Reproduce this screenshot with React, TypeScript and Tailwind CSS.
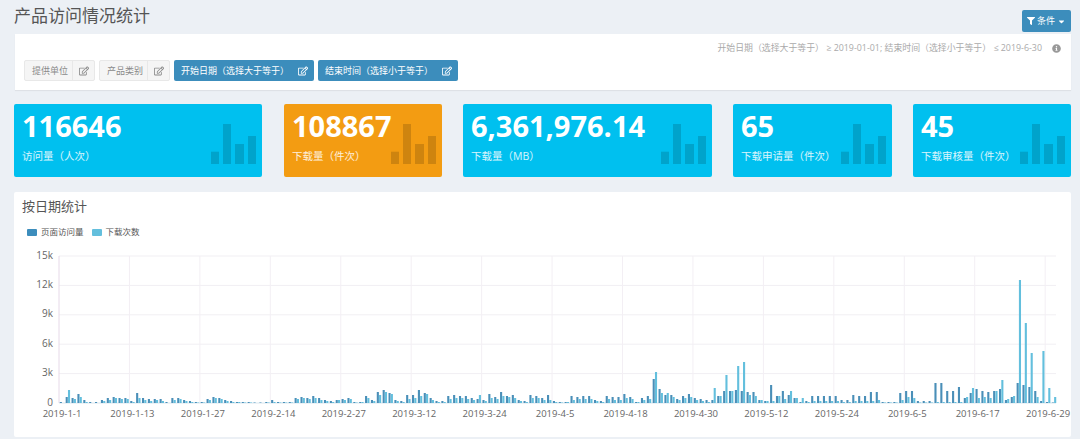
import { FaCaretDown, FaFilter, FaInfoCircle, FaRegEdit } from "react-icons/fa";

const dark = [
  1, 6, 5, 9, 3, 1, 1, 3, 5, 6, 5, 5,
  2, 10, 5, 4, 4, 4, 1, 5, 5, 3, 2, 1,
  1, 4, 6, 5, 3, 2, 1, 1, 1, 0.5, 0.5, 1,
  3, 1, 1, 1, 5, 6, 5, 7, 5, 3, 2, 3,
  4, 5, 1, 1, 7, 3, 11, 13, 10, 3, 2, 8,
  8, 13, 10, 5, 2, 2, 7, 8, 7, 7, 5, 4,
  3, 9, 6, 11, 7, 8, 3, 2, 8, 7, 5, 8,
  2, 1, 1, 7, 6, 7, 7, 3, 2, 7, 6, 6,
  9, 6, 1, 5, 7, 24, 14, 8, 8, 4, 7, 9,
  5, 4, 3, 3, 7, 12, 12, 13, 12, 11, 11, 3,
  2, 18, 7, 12, 8, 5, 1, 2, 7, 7, 7, 7,
  7, 3, 3, 8, 7, 7, 11, 11, 1, 1, 1, 10,
  12, 12, 2, 2, 2, 20, 20, 12, 12, 16, 5, 10,
  14, 12, 11, 12, 14, 3, 6, 20, 18, 16, 12, 2,
  1, 0.5,
];

const light = [
  0, 13, 4, 6, 1, 0, 0, 2, 3, 5, 4, 4,
  1, 5, 3, 2, 3, 2, 0, 3, 4, 2, 1, 0.5,
  0.5, 3, 5, 4, 2, 1, 1, 0.5, 0.5, 0, 0, 0.5,
  1, 0.5, 0.5, 0.5, 4, 5, 4, 5, 3, 2, 1, 3,
  3, 4, 0.5, 1, 5, 2, 8, 11, 9, 2, 1, 4,
  5, 7, 9, 3, 1, 1, 4, 5, 5, 4, 3, 8,
  2, 5, 4, 7, 6, 5, 2, 1, 5, 5, 3, 3,
  1, 0.5, 1, 3, 4, 4, 4, 2, 1, 4, 3, 3,
  5, 4, 1, 3, 4, 31, 10, 10, 6, 3, 5, 6,
  3, 2, 1, 15, 7, 28, 12, 37, 41, 8, 7, 3,
  2, 2, 7, 4, 12, 5, 5, 1, 2, 2, 2, 2,
  2, 1, 1, 2, 2, 2, 2, 3, 0.5, 0.5, 0.5, 3,
  6, 5, 0.5, 0.5, 0.5, 1, 1, 1, 1, 1, 6, 15,
  5, 6, 5, 12, 23, 4, 7, 123, 80, 50, 6, 52,
  15, 6,
];

const xLabels = [
  "2019-1-1", "2019-1-13", "2019-1-27", "2019-2-14", "2019-2-27",
  "2019-3-12", "2019-3-24", "2019-4-5", "2019-4-18", "2019-4-30",
  "2019-5-12", "2019-5-24", "2019-6-5", "2019-6-17", "2019-6-29",
];

const yLabels = ["0", "3k", "6k", "9k", "12k", "15k"];

const cards = [
  { value: "116646", label: "访问量（人次）", width: "w-[248px] mr-px", bg: "bg-[#00c0ef]" },
  { value: "108867", label: "下载量（件次）", width: "w-[158px]", bg: "bg-[#f39c12]" },
  { value: "6,361,976.14", label: "下载量（MB）", width: "w-[249px]", bg: "bg-[#00c0ef]" },
  { value: "65", label: "下载申请量（件次）", width: "w-[159px]", bg: "bg-[#00c0ef]" },
  { value: "45", label: "下载审核量（件次）", width: "w-[158px]", bg: "bg-[#00c0ef]" },
];

function StatsIcon() {
  return (
    <svg className="absolute right-[6px] bottom-[13px]" width="45" height="40" viewBox="0 0 45 40" fill="currentColor">
      <rect x="0" y="27.7" width="8" height="12.3" />
      <rect x="12" y="0" width="8" height="40" />
      <rect x="24" y="20" width="9" height="20" />
      <rect x="37" y="12" width="8" height="28" />
    </svg>
  );
}

function DateChart() {
  const base = 403;
  const band = 5.87;
  return (
    <svg className="block mt-[5px]" width="1057" height="194" viewBox="14 243 1057 194">
      {yLabels.map((label, i) => {
        const y = base - i * 29.4;
        return (
          <g key={label}>
            {i > 0 && <line x1="59" x2="1056" y1={y} y2={y} stroke="#f1eff3" />}
            <text x="53" y={y + 2.5} textAnchor="end" fontSize="10" fill="#666">{label}</text>
          </g>
        );
      })}
      {xLabels.map((label, i) => {
        const x = 59 + i * 70.44;
        return (
          <g key={label}>
            <line x1={x} x2={x} y1="256" y2={base} stroke={i === 0 ? "#e6d9e8" : "#f3eff4"} />
            <text x={x + 3} y="416.5" textAnchor="middle" fontSize="9.5" fill="#666">{label}</text>
          </g>
        );
      })}
      <line x1="59" x2="1056" y1={base} y2={base} stroke="#d9e6ee" />
      {dark.map((h, i) => {
        const center = 62 + i * band;
        return (
          <g key={i}>
            <rect x={center - 2.2} y={base - h} width="2.1" height={h} fill="#4a8fb8" />
            <rect x={center + 0.1} y={base - light[i]} width="2.1" height={light[i]} fill="#63bfdd" />
          </g>
        );
      })}
    </svg>
  );
}

function GrayFilter({ label }: { label: string }) {
  return (
    <div className="flex h-[21px] w-[71px] items-center rounded-[2px] border border-[#e8e8e8] bg-[#f5f5f5] text-[#8a8a8a]">
      <span className="flex-1 pl-[7px] text-[9px]">{label}</span>
      <span className="flex h-full w-[22px] items-center justify-center border-l border-[#e8e8e8]">
        <FaRegEdit className="text-[10px]" />
      </span>
    </div>
  );
}

function BlueFilter({ label }: { label: string }) {
  return (
    <div className="flex h-[21px] w-[140px] items-center justify-between rounded-[2px] bg-[#3c8dbc] pl-[7px] pr-[6px] text-white">
      <span className="text-[9px]">{label}</span>
      <FaRegEdit className="text-[10px]" />
    </div>
  );
}

export default function App() {
  return (
    <div className="h-[439px] w-[1080px] overflow-hidden bg-[#ecf0f5] pl-[14px] pr-[9px] font-['Open_Sans','Noto_Sans_CJK_SC',sans-serif]">
      {/* Header */}
      <div className="flex h-[34px] items-start justify-between">
        <h1 className="mt-[4px] text-[17px] leading-6 font-normal text-[#555]">产品访问情况统计</h1>
        <button className="mt-[10px] flex h-[22px] w-[49px] items-center justify-center gap-[2px] rounded-[2px] bg-[#3c8dbc] text-[9px] text-white">
          <FaFilter className="text-[8px]" />
          条件
          <FaCaretDown className="text-[9px]" />
        </button>
      </div>

      {/* Filters */}
      <div className="ml-px h-[56px] bg-white px-[9px] shadow-[0_1px_1px_rgba(0,0,0,0.06)]">
        <div className="flex h-[26px] items-center justify-end gap-[10px] pr-[1px] pt-[2px] text-[8.9px] text-[#aaa]">
          <span>开始日期（选择大于等于） ≥ 2019-01-01; 结束时间（选择小于等于） ≤ 2019-6-30</span>
          <FaInfoCircle className="text-[9px] text-[#999]" />
        </div>
        <div className="flex gap-[4px]">
          <GrayFilter label="提供单位" />
          <GrayFilter label="产品类别" />
          <BlueFilter label="开始日期（选择大于等于）" />
          <BlueFilter label="结束时间（选择小于等于）" />
        </div>
      </div>

      {/* Stat cards */}
      <div className="mt-[14px] flex h-[73px] gap-[21px]">
        {cards.map((card) => (
          <div key={card.value} className={`relative rounded-[2px] px-[8px] pt-[2px] text-white ${card.width} ${card.bg}`}>
            <div className="text-[29px] leading-[40px] font-bold whitespace-nowrap">{card.value}</div>
            <div className="mt-[2px] text-[10.5px] leading-[16px] text-white/85 whitespace-nowrap">{card.label}</div>
            <div className="text-black/15">
              <StatsIcon />
            </div>
          </div>
        ))}
      </div>

      {/* Chart panel */}
      <div className="mt-[15px] h-[245px] rounded-[2px] bg-white">
        <h3 className="pl-[8px] pt-[6px] text-[13px] leading-4 font-normal text-[#555]">按日期统计</h3>
        <div className="mt-[12px] flex h-[12px] items-center pl-[13px] text-[8.5px] text-[#555]">
          <span className="h-[7px] w-[10px] rounded-[1px] bg-[#3c8dbc]"></span>
          <span className="ml-[4px]">页面访问量</span>
          <span className="ml-[8px] h-[7px] w-[10px] rounded-[1px] bg-[#63bfdd]"></span>
          <span className="ml-[4px]">下载次数</span>
        </div>
        <DateChart />
      </div>
    </div>
  );
}
